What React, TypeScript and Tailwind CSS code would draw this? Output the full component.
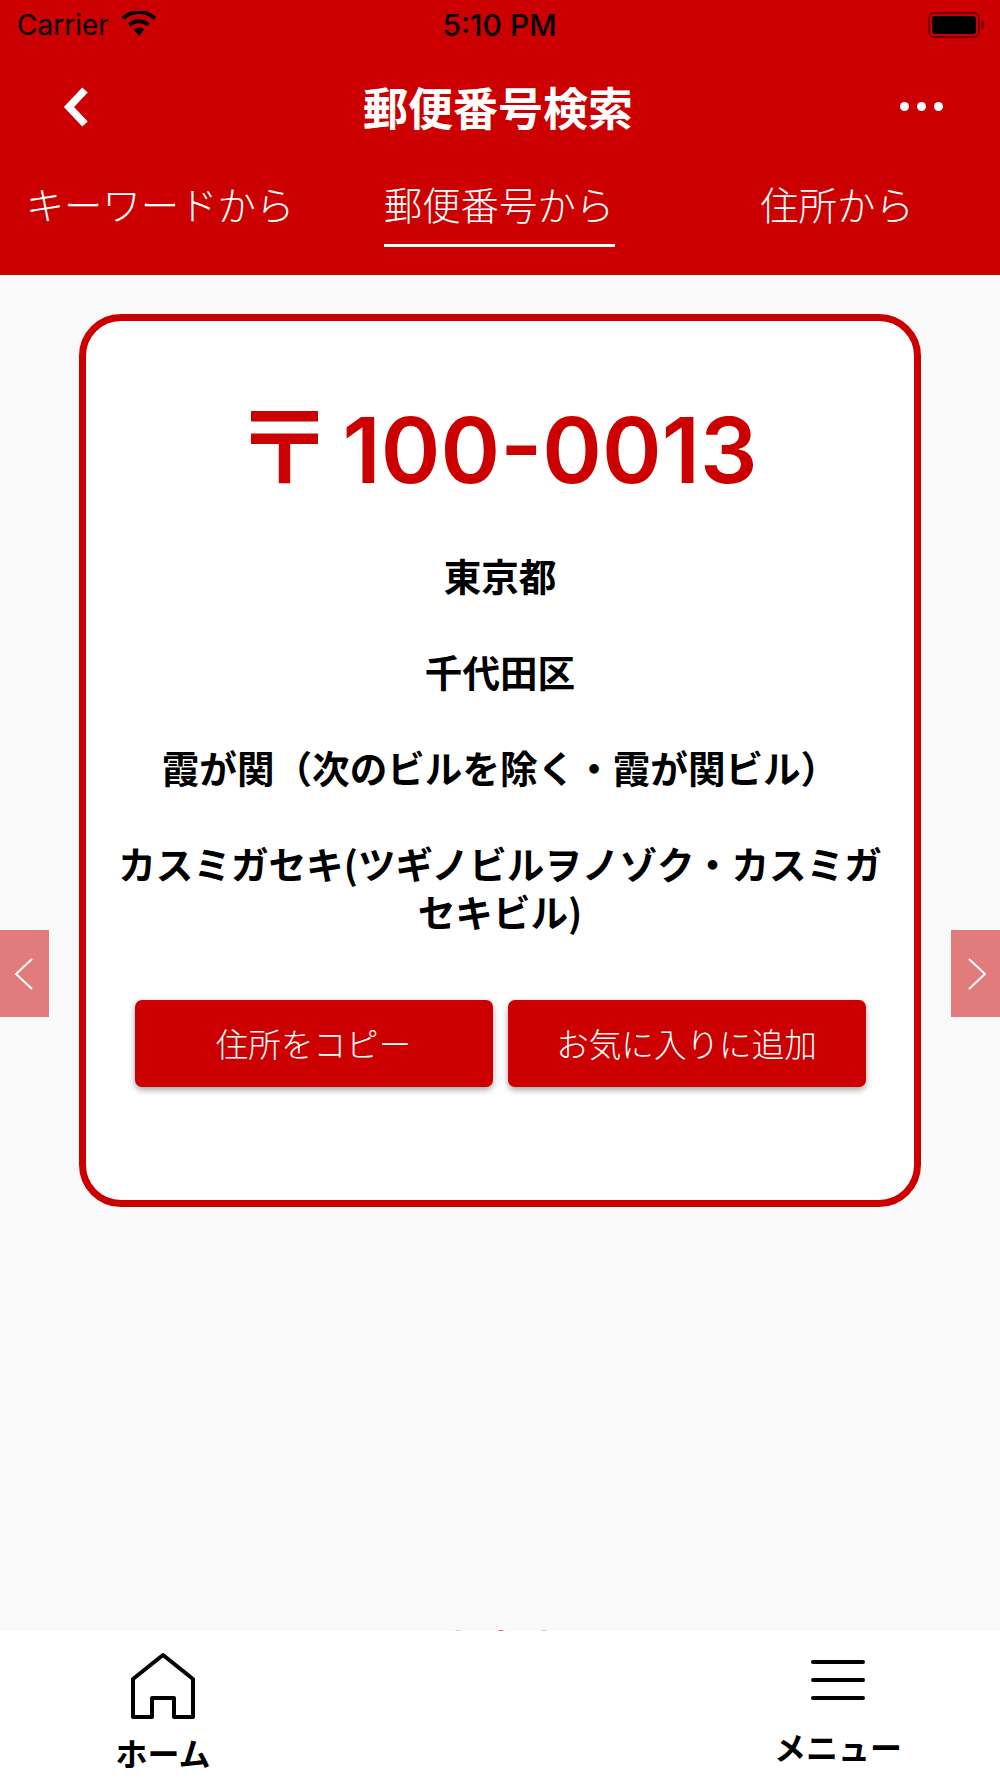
import React from "react";

const cjk = "font-['Noto_Sans_CJK_JP',sans-serif]";

function StatusBar() {
  return (
    <div className="flex h-[50px] items-center pl-[17px] pr-[16px] text-black">
      <div className="flex w-[300px] items-center">
        <span className="font-['Inter',sans-serif] text-[28px] leading-none">Carrier</span>
        <svg className="ml-[11px] mb-[3px]" width="38" height="26" viewBox="0 0 38 26">
          <path d="M19 25 L13.5 18.5 A8.5 8.5 0 0 1 24.5 18.5 Z" fill="#000" />
          <path d="M9.5 14 A14 14 0 0 1 28.5 14" fill="none" stroke="#000" strokeWidth="4" />
          <path d="M3 7.5 A23 23 0 0 1 35 7.5" fill="none" stroke="#000" strokeWidth="4" />
        </svg>
      </div>
      <span className="flex-1 pr-[2px] text-center font-['Inter',sans-serif] text-[30px] font-medium leading-none">5:10 PM</span>
      <div className="flex w-[300px] items-center justify-end">
        <div className="flex h-[26px] w-[52px] items-center justify-center rounded-[6px] border-2 border-[#7d0000]">
          <div className="h-[18px] w-[44px] rounded-[3px] bg-black" />
        </div>
        <div className="ml-[1px] h-[8px] w-[3px] rounded-r-[2px] bg-[#7d0000]" />
      </div>
    </div>
  );
}

function TitleBar() {
  return (
    <div className="flex h-[100px] items-center justify-between pl-[60px] pr-[57px] pt-[13px] text-white">
      <svg width="30" height="44" viewBox="0 0 30 44">
        <path d="M25 5 L9 22 L25 39" fill="none" stroke="#fff" strokeWidth="7.5" />
      </svg>
      <h1 className={`${cjk} ml-[6px] text-[45px] font-bold leading-none`}>郵便番号検索</h1>
      <div className="flex gap-[8px]">
        <div className="size-[9px] rounded-full bg-white" />
        <div className="size-[9px] rounded-full bg-white" />
        <div className="size-[9px] rounded-full bg-white" />
      </div>
    </div>
  );
}

function Tabs() {
  return (
    <div className={`${cjk} grid h-[125px] grid-cols-[320px_358px_1fr] pr-[4px] pt-[26px] text-[38.4px] font-light leading-[54px] text-white`}>
      <div className="text-center">キーワードから</div>
      <div className="flex flex-col items-center">
        <span>郵便番号から</span>
        <div className="mt-[14px] h-[3px] w-[231px] bg-white" />
      </div>
      <div className="text-center">住所から</div>
    </div>
  );
}

function ResultCard() {
  return (
    <div className="ml-[79px] h-[893px] w-[842px] rounded-[42px] border-[7px] border-[#cc0000] bg-white px-[29px] pt-[77px]">
      <div className="flex h-[100px] items-center justify-center pr-[8px] text-[#cc0000]">
        <span className={`${cjk} mb-[14px] text-[100px] font-bold leading-[100px]`}>〒</span>
        <span className="ml-[8px] mt-[4px] font-['Inter',sans-serif] text-[90.5px] font-semibold leading-[100px]">100-0013</span>
      </div>
      <div className={`${cjk} mt-[53px] flex flex-col gap-[48px] text-center text-[37.6px] font-bold leading-[48px] text-black`}>
        <p>東京都</p>
        <p>千代田区</p>
        <p>霞が関（次のビルを除く・霞が関ビル）</p>
        <p>カスミガセキ(ツギノビルヲノゾク・カスミガセキビル)</p>
      </div>
      <div className={`${cjk} mt-[65px] flex justify-center gap-[15px] text-[32.6px] font-light text-white`}>
        <button className="h-[87px] w-[358px] rounded-[7px] bg-[#cc0000] shadow-[0_3px_6px_rgba(0,0,0,0.35)]">住所をコピー</button>
        <button className="h-[87px] w-[358px] rounded-[7px] bg-[#cc0000] shadow-[0_3px_6px_rgba(0,0,0,0.35)]">お気に入りに追加</button>
      </div>
    </div>
  );
}

function BottomBar() {
  return (
    <div className="relative flex h-[147px] justify-between bg-white pl-[115px] pr-[92px] font-bold text-black">
      <div className="flex w-[96px] flex-col items-center pt-[21px]">
        <svg width="66" height="68" viewBox="0 0 66 68">
          <path d="M3 65 V27 L33 3 L63 27 V65 H44 V46 H22 V65 Z" fill="none" stroke="#000" strokeWidth="4" strokeLinejoin="round" />
        </svg>
        <span className={`${cjk} mt-[14px] whitespace-nowrap text-[32px] leading-[36px]`}>ホーム</span>
      </div>
      <div className="flex w-[140px] flex-col items-center pt-[29px]">
        <div className="flex flex-col gap-[14px]">
          <div className="h-[4px] w-[54px] rounded-full bg-black" />
          <div className="h-[4px] w-[54px] rounded-full bg-black" />
          <div className="h-[4px] w-[54px] rounded-full bg-black" />
        </div>
        <span className={`${cjk} mt-[28px] whitespace-nowrap text-[32px] leading-[36px]`}>メニュー</span>
      </div>
    </div>
  );
}

export default function App() {
  return (
    <div className="flex h-[1778px] w-[1000px] flex-col overflow-hidden bg-[#f9f9f9]">
      <header className="bg-[#cc0000]">
        <StatusBar />
        <TitleBar />
        <Tabs />
      </header>

      <main className="relative flex-1 pt-[39px]">
        <ResultCard />
        <div className="absolute left-0 top-[655px] flex h-[87px] w-[49px] items-center justify-center bg-[#e27c7c] pr-[2px]">
          <svg width="20" height="34" viewBox="0 0 20 34">
            <path d="M18 2 L2 17 L18 32" fill="none" stroke="#fff" strokeWidth="2" />
          </svg>
        </div>
        <div className="absolute right-0 top-[655px] flex h-[87px] w-[49px] items-center justify-center bg-[#e27c7c] pl-[2px]">
          <svg width="20" height="34" viewBox="0 0 20 34">
            <path d="M2 2 L18 17 L2 32" fill="none" stroke="#fff" strokeWidth="2" />
          </svg>
        </div>
        {/* page dots, mostly hidden behind the tab bar */}
        <div className="absolute bottom-[-7px] left-[454px] flex gap-[35px]">
          <div className="size-[8px] rounded-full bg-[#cccccc]" />
          <div className="size-[8px] rounded-full bg-[#f0525c]" />
          <div className="size-[8px] rounded-full bg-[#cccccc]" />
        </div>
      </main>

      <BottomBar />
    </div>
  );
}
